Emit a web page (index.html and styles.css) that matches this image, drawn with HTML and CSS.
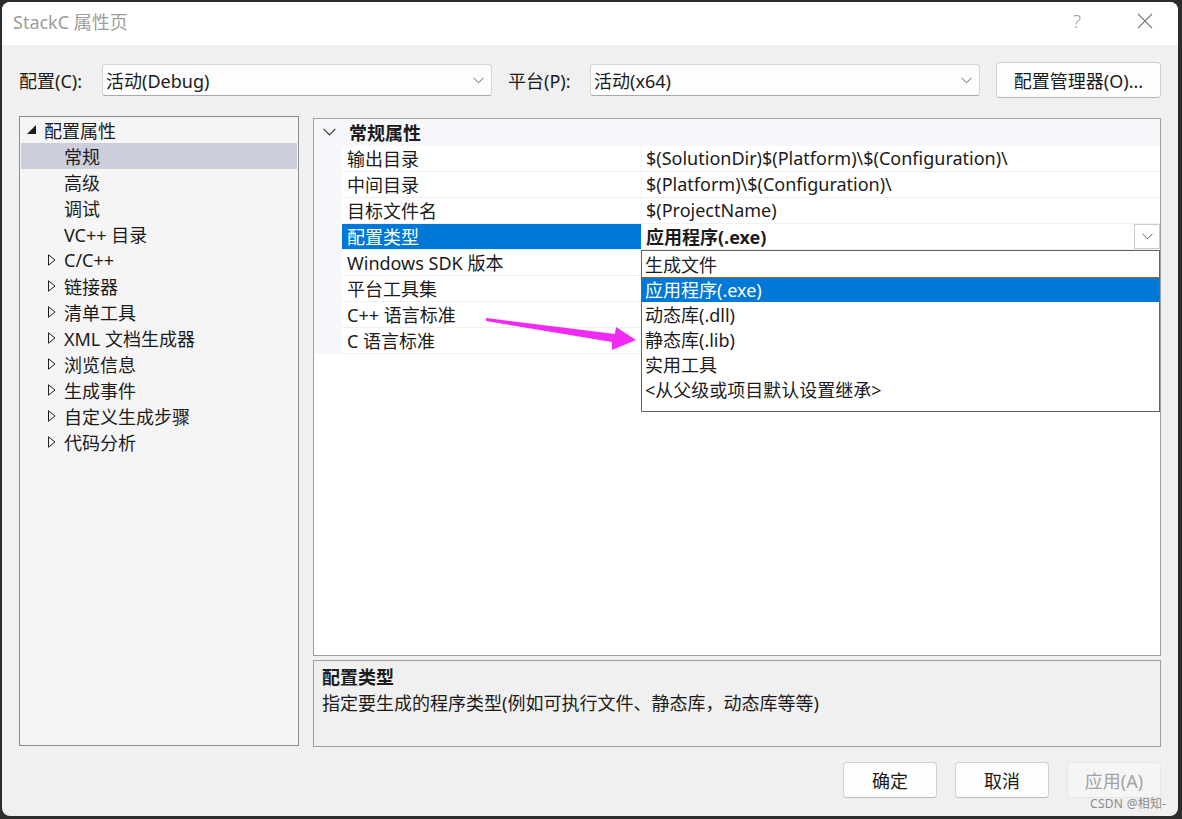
FILE: index.html
```html
<!DOCTYPE html>
<html lang="zh-CN">
<head>
<meta charset="utf-8">
<title>StackC 属性页</title>
<link rel="stylesheet" href="styles.css">
</head>
<body>
<div class="window">
  <div class="titlebar">
    <span class="title">StackC 属性页</span>
    <span class="help">?</span>
    <span class="close"><svg width="16" height="16" viewBox="0 0 16 16"><path d="M1 1 L15 15 M15 1 L1 15" stroke="#7a7a7a" stroke-width="1.1" fill="none"/></svg></span>
  </div>
  <div class="content">
    <div class="toprow">
      <span class="lbl lbl1">配置(C):</span>
      <div class="combo"><span>活动(Debug)</span><svg class="chev" width="11" height="7" viewBox="0 0 11 7"><path d="M0.5 0.8 L5.5 5.8 L10.5 0.8" stroke="#606060" stroke-width="1" fill="none"/></svg></div>
      <span class="lbl lbl2">平台(P):</span>
      <div class="combo"><span>活动(x64)</span><svg class="chev" width="11" height="7" viewBox="0 0 11 7"><path d="M0.5 0.8 L5.5 5.8 L10.5 0.8" stroke="#606060" stroke-width="1" fill="none"/></svg></div>
      <button class="btn mgr">配置管理器(O)...</button>
    </div>
    <div class="main">
      <div class="tree">
        <div class="node lvl0"><span class="tri"><svg width="9" height="9" viewBox="0 0 9 9"><path d="M0 9 L9 9 L9 0 Z" fill="#1e1e1e"/></svg></span>配置属性</div>
        <div class="node lvl1 sel"><span class="tri"></span>常规</div>
        <div class="node lvl1"><span class="tri"></span>高级</div>
        <div class="node lvl1"><span class="tri"></span>调试</div>
        <div class="node lvl1"><span class="tri"></span>VC++ 目录</div>
        <div class="node lvl1"><span class="tri"><svg width="8" height="12" viewBox="0 0 8 12"><path d="M0.5 0.8 L7 6 L0.5 11.2 Z" fill="none" stroke="#1e1e1e" stroke-width="1"/></svg></span>C/C++</div>
        <div class="node lvl1"><span class="tri"><svg width="8" height="12" viewBox="0 0 8 12"><path d="M0.5 0.8 L7 6 L0.5 11.2 Z" fill="none" stroke="#1e1e1e" stroke-width="1"/></svg></span>链接器</div>
        <div class="node lvl1"><span class="tri"><svg width="8" height="12" viewBox="0 0 8 12"><path d="M0.5 0.8 L7 6 L0.5 11.2 Z" fill="none" stroke="#1e1e1e" stroke-width="1"/></svg></span>清单工具</div>
        <div class="node lvl1"><span class="tri"><svg width="8" height="12" viewBox="0 0 8 12"><path d="M0.5 0.8 L7 6 L0.5 11.2 Z" fill="none" stroke="#1e1e1e" stroke-width="1"/></svg></span>XML 文档生成器</div>
        <div class="node lvl1"><span class="tri"><svg width="8" height="12" viewBox="0 0 8 12"><path d="M0.5 0.8 L7 6 L0.5 11.2 Z" fill="none" stroke="#1e1e1e" stroke-width="1"/></svg></span>浏览信息</div>
        <div class="node lvl1"><span class="tri"><svg width="8" height="12" viewBox="0 0 8 12"><path d="M0.5 0.8 L7 6 L0.5 11.2 Z" fill="none" stroke="#1e1e1e" stroke-width="1"/></svg></span>生成事件</div>
        <div class="node lvl1"><span class="tri"><svg width="8" height="12" viewBox="0 0 8 12"><path d="M0.5 0.8 L7 6 L0.5 11.2 Z" fill="none" stroke="#1e1e1e" stroke-width="1"/></svg></span>自定义生成步骤</div>
        <div class="node lvl1"><span class="tri"><svg width="8" height="12" viewBox="0 0 8 12"><path d="M0.5 0.8 L7 6 L0.5 11.2 Z" fill="none" stroke="#1e1e1e" stroke-width="1"/></svg></span>代码分析</div>
      </div>
      <div class="right">
        <div class="grid">
          <div class="cat">
            <span class="catchev"><svg width="13" height="8" viewBox="0 0 13 8"><path d="M0.6 0.8 L6.5 6.8 L12.4 0.8" stroke="#3a3a3a" stroke-width="1.2" fill="none"/></svg></span>
            <span class="catname">常规属性</span>
          </div>
          <div class="row"><span class="gut"></span><span class="name">输出目录</span><span class="val">$(SolutionDir)$(Platform)\$(Configuration)\</span></div>
          <div class="row"><span class="gut"></span><span class="name">中间目录</span><span class="val">$(Platform)\$(Configuration)\</span></div>
          <div class="row"><span class="gut"></span><span class="name">目标文件名</span><span class="val">$(ProjectName)</span></div>
          <div class="row active"><span class="gut"></span><span class="name">配置类型</span><span class="val"><b>应用程序(.exe)</b><span class="ddbtn"><svg width="11" height="7" viewBox="0 0 11 7"><path d="M0.5 0.8 L5.5 5.8 L10.5 0.8" stroke="#606060" stroke-width="1" fill="none"/></svg></span></span></div>
          <div class="row"><span class="gut"></span><span class="name">Windows SDK 版本</span><span class="val"></span></div>
          <div class="row"><span class="gut"></span><span class="name">平台工具集</span><span class="val"></span></div>
          <div class="row"><span class="gut"></span><span class="name">C++ 语言标准</span><span class="val"></span></div>
          <div class="row"><span class="gut"></span><span class="name">C 语言标准</span><span class="val"></span></div>
          <div class="dropdown">
            <div class="opt">生成文件</div>
            <div class="opt cur">应用程序(.exe)</div>
            <div class="opt">动态库(.dll)</div>
            <div class="opt">静态库(.lib)</div>
            <div class="opt">实用工具</div>
            <div class="opt">&lt;从父级或项目默认设置继承&gt;</div>
          </div>
        </div>
        <div class="desc">
          <div class="desctitle">配置类型</div>
          <div class="desctext">指定要生成的程序类型(例如可执行文件、静态库，动态库等等)</div>
        </div>
      </div>
    </div>
    <div class="footer">
      <button class="btn act">确定</button>
      <button class="btn act">取消</button>
      <button class="btn act disabled">应用(A)</button>
    </div>
  </div>
  <span class="watermark">CSDN @相知-</span>
</div>
<svg class="arrow" width="1182" height="819" viewBox="0 0 1182 819">
  <path d="M486 318 L615 334 L616 327 L636 340 L612 350 L612 342 L486 321 Z" fill="#f02af0"/>
</svg>
</body>
</html>
```

FILE: styles.css
```css
* { box-sizing: border-box; }
html, body { margin: 0; padding: 0; }
body {
  width: 1182px;
  height: 819px;
  background: #2c2c2c;
  font-family: "Noto Sans", "Noto Sans CJK SC", sans-serif;
  font-size: 18px;
  color: #1b1b1b;
  overflow: hidden;
}
.window {
  position: relative;
  margin: 2px 0 0 2px;
  width: 1176px;
  height: 814px;
  background: #f0f0f0;
  border-radius: 8px;
  overflow: hidden;
  display: flex;
  flex-direction: column;
}
.titlebar {
  height: 43px;
  background: #ffffff;
  display: flex;
  align-items: center;
  padding-left: 11px;
  padding-bottom: 5px;
  flex: none;
}
.title {
  color: #9c9c9c;
  font-size: 18px;
  flex: 1;
}
.help {
  color: #a0a0a0;
  font-size: 19px;
  width: 20px;
  margin-right: 44px;
  font-weight: 300;
}
.close {
  width: 16px;
  height: 16px;
  margin-right: 25px;
  display: flex;
}
.content {
  flex: 1;
  padding: 17px 17px 0 17px;
  display: flex;
  flex-direction: column;
}
.toprow {
  height: 36px;
  display: flex;
  align-items: center;
  flex: none;
}
.lbl { flex: none; }
.lbl1 { width: 83px; }
.lbl2 { width: 82px; margin-left: 16px; }
.combo {
  width: 390px;
  height: 32px;
  background: #fdfdfd;
  border: 1px solid #d6d6d6;
  border-bottom-color: #a8a8a8;
  border-radius: 3px;
  display: flex;
  align-items: center;
  justify-content: space-between;
  padding: 0 7px 0 3px;
  flex: none;
}
.btn {
  font-family: inherit;
  font-size: 18px;
  color: #1b1b1b;
  background: #fdfdfd;
  border: 1px solid #d0d0d0;
  border-bottom-color: #b8b8b8;
  border-radius: 4px;
  height: 36px;
  padding: 0;
  flex: none;
}
.mgr { width: 165px; margin-left: auto; }
.main {
  margin-top: 18px;
  height: 631px;
  display: flex;
  flex: none;
}
.tree {
  width: 280px;
  height: 630px;
  background: #f5f5f5;
  border: 1px solid #8c8c8c;
  padding: 0 1px 1px 1px;
  flex: none;
}
.node {
  height: 26px;
  display: flex;
  align-items: center;
  white-space: nowrap;
  padding-bottom: 1px;
}
.tri {
  width: 10px;
  display: flex;
  align-items: center;
  justify-content: flex-start;
}
.lvl0 { padding-left: 6px; }
.lvl0 .tri { width: 17px; }
.lvl1 { padding-left: 27px; }
.lvl1 .tri { width: 16px; }
.node.sel { background: #cccedb; }
.right {
  margin-left: 14px;
  margin-top: 2px;
  width: 848px;
  display: flex;
  flex-direction: column;
}
.grid {
  position: relative;
  height: 538px;
  background: #ffffff;
  border: 1px solid #a0a0a0;
  flex: none;
}
.cat {
  height: 27px;
  display: flex;
  align-items: center;
  background: #f5f7fa;
  padding-bottom: 1px;
}
.catchev {
  width: 35px;
  padding-left: 9px;
  display: flex;
  align-items: center;
}
.catname { font-weight: bold; }
.row {
  height: 26px;
  display: flex;
}
.gut {
  width: 28px;
  background: #f5f7fa;
  flex: none;
}
.name {
  width: 300px;
  padding-left: 5px;
  padding-bottom: 1px;
  border-bottom: 1px solid #f0f0f0;
  border-right: 1px solid #f0f0f0;
  display: flex;
  align-items: center;
  white-space: nowrap;
  flex: none;
}
.val {
  flex: 1;
  padding-left: 4px;
  padding-bottom: 1px;
  border-bottom: 1px solid #f0f0f0;
  display: flex;
  align-items: center;
  white-space: nowrap;
  position: relative;
}
.row.active .name {
  background: #0078d7;
  color: #ffffff;
  border-right-color: #ffffff;
}
.ddbtn {
  position: absolute;
  right: 0;
  top: 0;
  width: 26px;
  height: 25px;
  border: 1px solid #cccccc;
  background: #ffffff;
  display: flex;
  align-items: center;
  justify-content: center;
}
.dropdown {
  position: absolute;
  left: 327px;
  top: 131px;
  width: 519px;
  height: 162px;
  background: #ffffff;
  border: 1px solid #646464;
  padding: 1px 0 0 0;
}
.opt {
  height: 25px;
  padding-left: 3px;
  padding-bottom: 2px;
  display: flex;
  align-items: center;
  white-space: nowrap;
}
.opt.cur {
  background: #0078d7;
  color: #ffffff;
  border-top: 1px dotted #b06a2a;
}
.desc {
  margin-top: 4px;
  height: 87px;
  border: 1px solid #a0a0a0;
  background: #f0f0f0;
  padding: 3px 8px;
  flex: none;
}
.desctitle { font-weight: bold; height: 26px; line-height: 26px; }
.desctext { height: 26px; line-height: 26px; }
.footer {
  margin-top: 15px;
  display: flex;
  justify-content: flex-end;
  gap: 18px;
}
.act { width: 94px; }
.disabled {
  color: #a3a3a3;
  background: #f5f5f5;
  border-color: #e6e6e6;
}
.watermark {
  position: absolute;
  left: 1088px;
  top: 792px;
  font-size: 12px;
  color: #8a8a8a;
  letter-spacing: 0.3px;
}
.arrow {
  position: absolute;
  left: 0;
  top: 0;
  pointer-events: none;
}
```
